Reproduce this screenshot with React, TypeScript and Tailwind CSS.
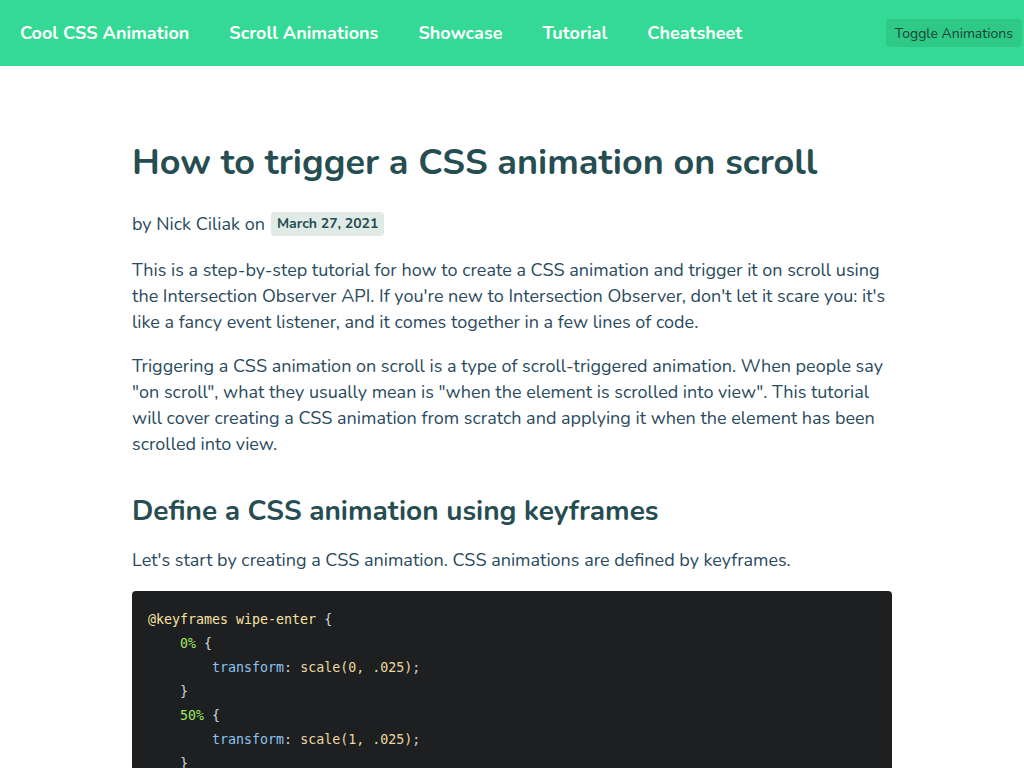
import React from "react";

const navLinks = ["Cool CSS Animation", "Scroll Animations", "Showcase", "Tutorial", "Cheatsheet"];

const Nav = () => (
  <header className="flex h-[66px] items-center bg-[#33d994] pl-5 pr-[2px]">
    <nav className="flex items-center gap-10">
      {navLinks.map((l) => (
        <a key={l} href="#" className="text-[18px] font-bold text-white">
          {l}
        </a>
      ))}
    </nav>
    <button className="ml-auto h-[28px] rounded bg-[#2dc985] px-[9px] text-[14px] text-[#1d3f3a]">
      Toggle Animations
    </button>
  </header>
);

const Code = () => (
  <pre className="mt-[18px] rounded bg-[#1e1f21] px-4 pt-[17px] pb-4 font-['DejaVu_Sans_Mono',monospace] text-[13.3px] leading-[24px] text-[#d4d4d4]">
    <span className="text-[#f7e3a1]">@keyframes wipe-enter</span> {"{"}
    {"\n    "}
    <span className="text-[#9ce75c]">0%</span> {"{"}
    {"\n        "}
    <span className="text-[#8dc5f2]">transform</span>: <span className="text-[#ead9a0]">scale(0, .025)</span>;
    {"\n    }\n    "}
    <span className="text-[#9ce75c]">50%</span> {"{"}
    {"\n        "}
    <span className="text-[#8dc5f2]">transform</span>: <span className="text-[#ead9a0]">scale(1, .025)</span>;
    {"\n    }\n    "}
    <span className="text-[#9ce75c]">100%</span> {"{"}
    {"\n        "}
    <span className="text-[#8dc5f2]">transform</span>: <span className="text-[#ead9a0]">scale(1, 1)</span>;
    {"\n    }\n}"}
  </pre>
);

export default function App() {
  return (
    <div className="min-h-screen bg-white font-['Nunito','Lato',sans-serif] text-[#2a4a5e]">
      <Nav />
      <main className="mx-auto w-[760px] pt-[75px]">
        <h1 className="text-[36px] font-bold leading-[44px] text-[#264d52]">
          How to trigger a CSS animation on scroll
        </h1>
        <p className="mt-[26px] flex items-center text-[18px] leading-[26px]">
          by Nick Ciliak on
          <span className="ml-[6px] rounded bg-[#e0ebe6] px-[6px] py-[2px] text-[14px] font-bold leading-[20px] text-[#264d52]">
            March 27, 2021
          </span>
        </p>
        <p className="mt-[20px] text-[18px] leading-[26px]">
          This is a step-by-step tutorial for how to create a CSS animation and trigger it on scroll using
          <br />
          the Intersection Observer API. If you're new to Intersection Observer, don't let it scare you: it's
          <br />
          like a fancy event listener, and it comes together in a few lines of code.
        </p>
        <p className="mt-[18px] text-[18px] leading-[26px]">
          Triggering a CSS animation on scroll is a type of scroll-triggered animation. When people say
          <br />
          "on scroll", what they usually mean is "when the element is scrolled into view". This tutorial
          <br />
          will cover creating a CSS animation from scratch and applying it when the element has been
          <br />
          scrolled into view.
        </p>
        <h2 className="mt-[36px] text-[28px] font-bold leading-[36px] text-[#264d52]">
          Define a CSS animation using keyframes
        </h2>
        <p className="mt-[18px] text-[18px] leading-[26px]">
          Let's start by creating a CSS animation. CSS animations are defined by keyframes.
        </p>
        <Code />
      </main>
    </div>
  );
}
